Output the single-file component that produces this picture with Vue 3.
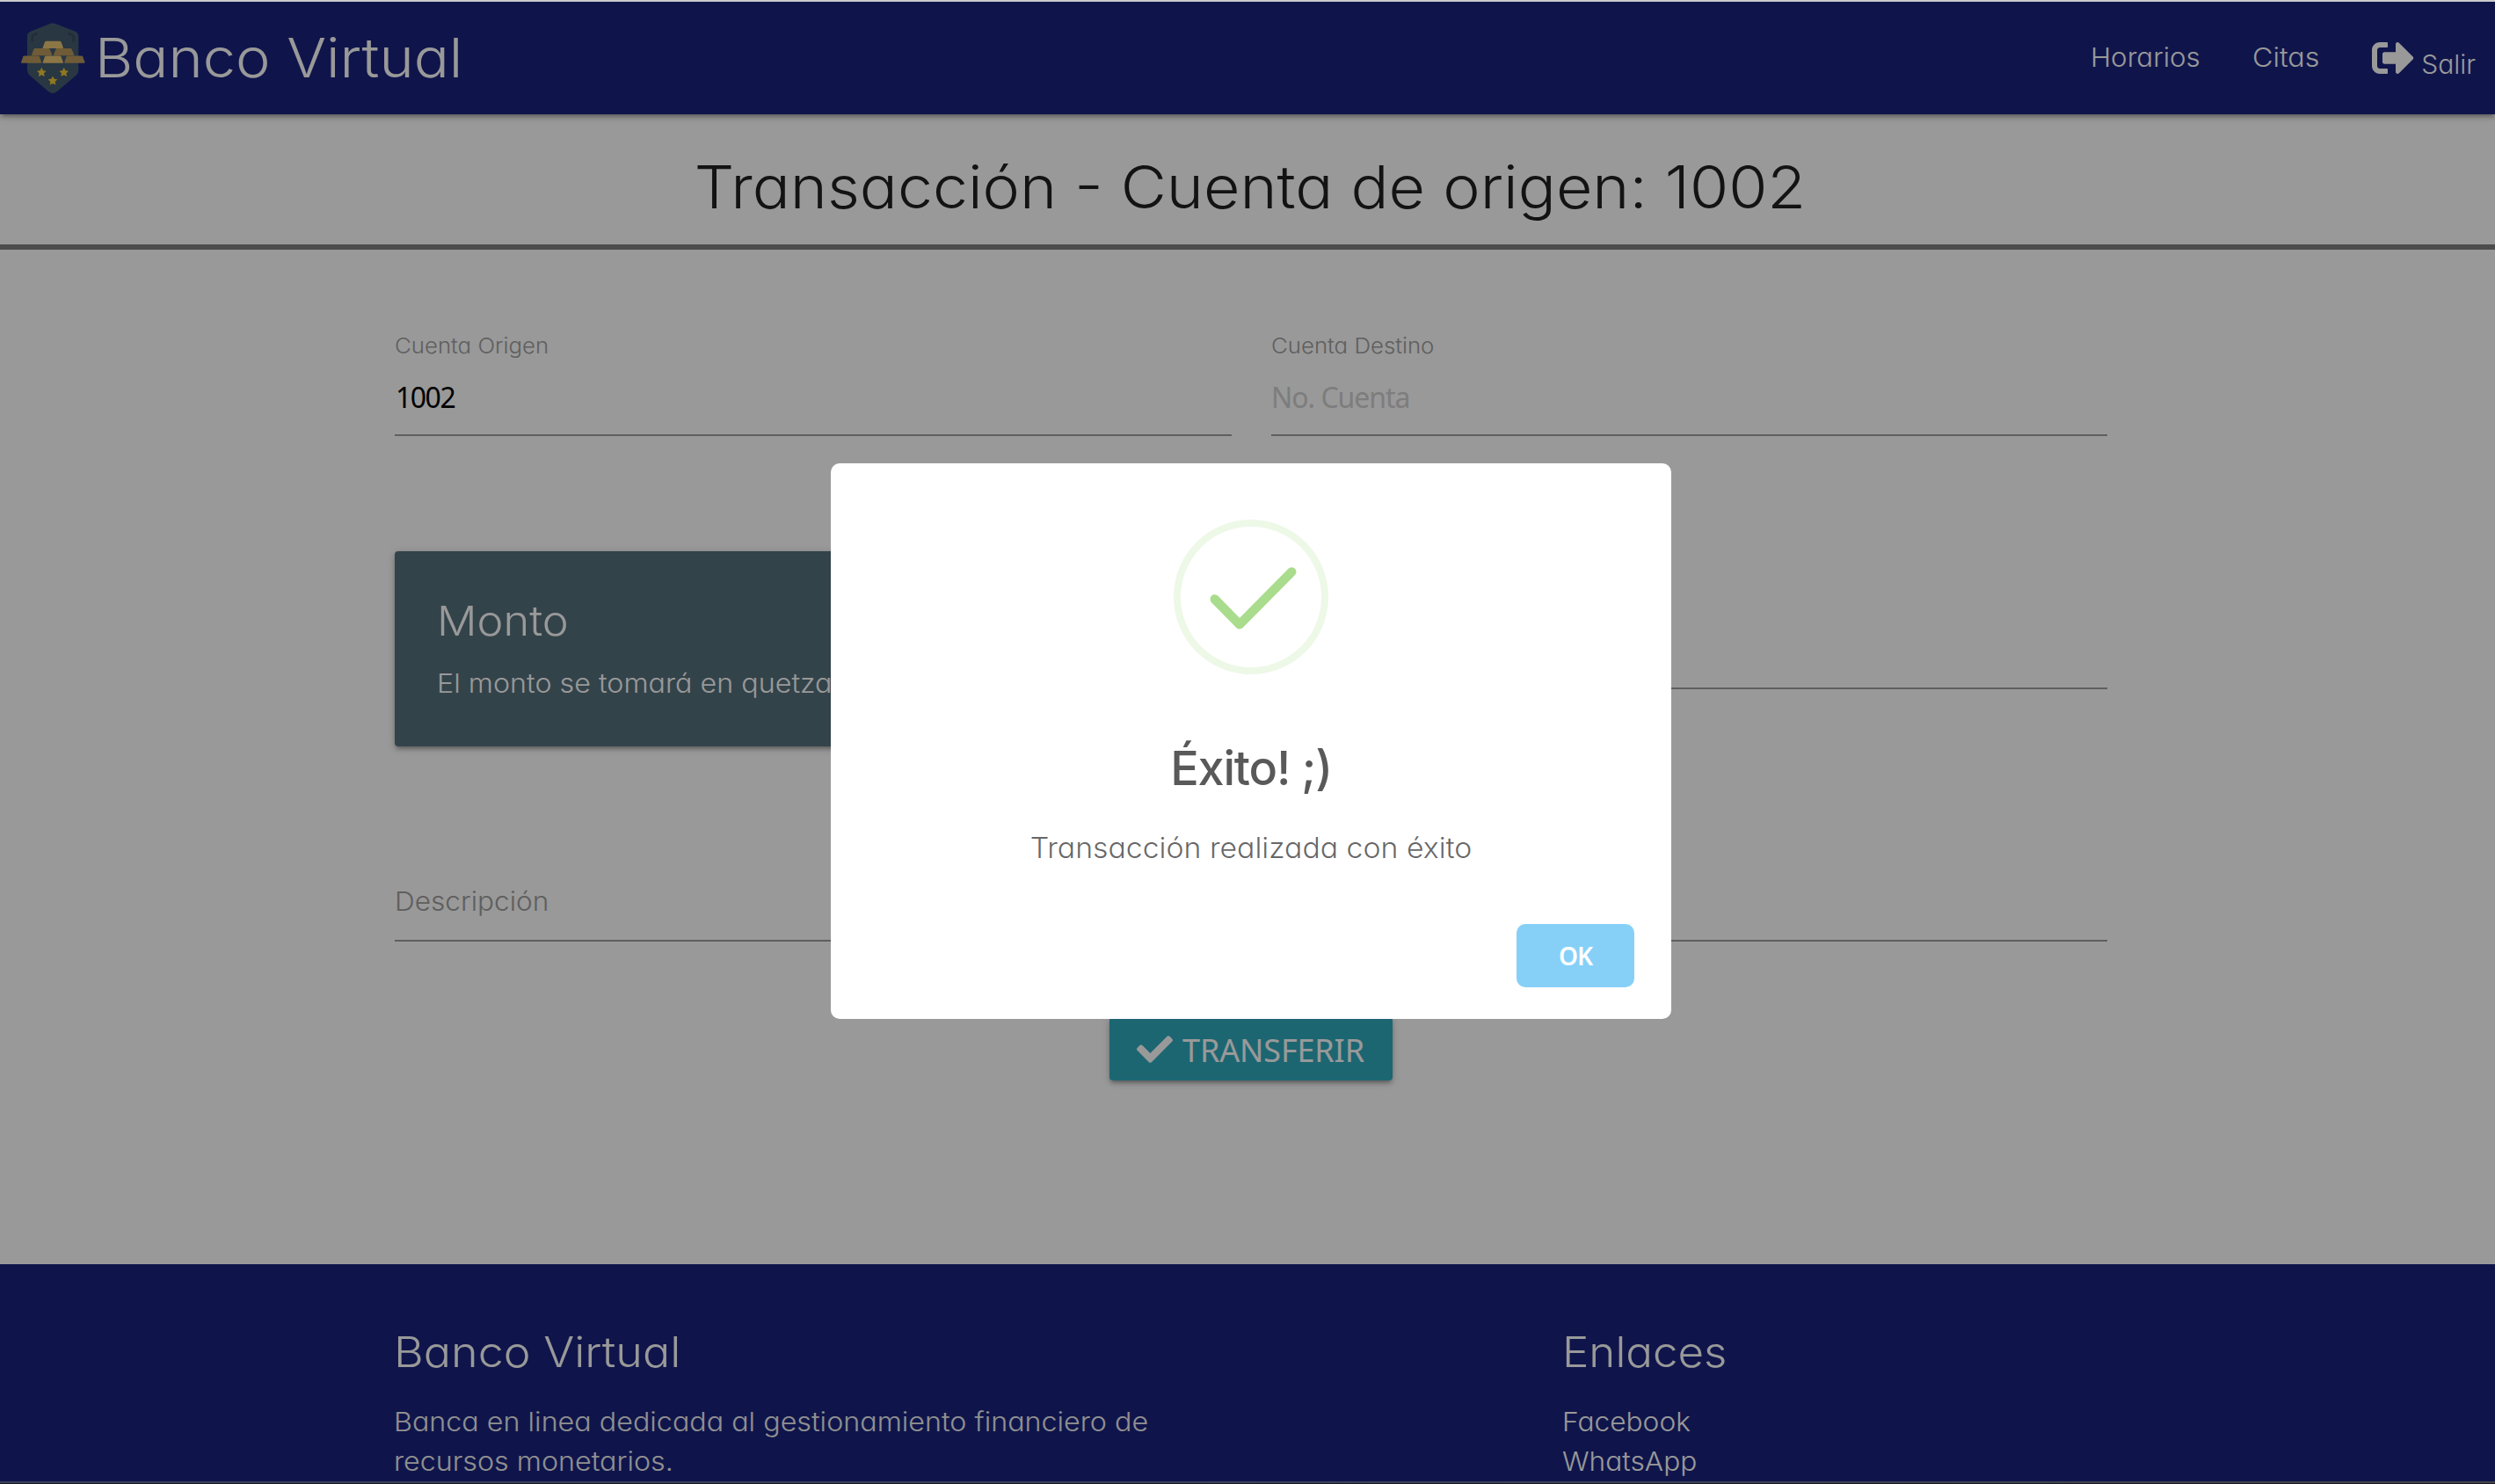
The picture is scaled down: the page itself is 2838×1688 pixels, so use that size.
<script setup>
import { ref } from 'vue'

const cuentaOrigen = ref('1002')
const enlaces = ['Facebook', 'WhatsApp']
const barras = [
  { x: 28.7, y: 20.7, fill: '#ebc576' },
  { x: 16, y: 29, fill: '#b9985d' },
  { x: 41, y: 29, fill: '#b9985d' },
  { x: 4, y: 37.4, fill: '#b9985d' },
  { x: 28.7, y: 37.4, fill: '#ebc576' },
  { x: 53.3, y: 37.4, fill: '#b9985d' }
]
const estrellas = [[27.3, 56.2], [52.7, 56.2], [40, 65.8]]
</script>

<template>
  <div class="window">
    <div class="edge-top"></div>
    <div class="app">
      <nav class="nav">
        <a class="brand">
          <svg class="shield" viewBox="0 0 80 80">
            <path d="M36.8 1Q40 -.6 43.2 1L65.5 9.8Q69.3 11.5 69.3 15.5V53.5Q69.3 57 66.8 59.4L45 78Q40 81.8 35 78L13.500 59.400Q11 57 11 53.500V15.500Q11 11.500 14.800 9.800Z" fill="#445c6e" />
            <path d="M16.700 21.500V16.200Q16.700 14.500 18.300 13.700L22.500 12M63.600 21.500V16.200Q63.600 14.500 62 13.700L57.800 12" fill="none" stroke="#394b60" stroke-width="2.600" />
            <path v-for="(b, i) in barras" :key="i" :fill="b.fill" :transform="`translate(${b.x} ${b.y})`" d="M3.600 0H19.400Q20.300 0 20.700 .9L23.200 7.300Q23.400 8.300 22.600 8.300H.5Q-.3 8.300 0 7.300L2.400 .9Q2.800 0 3.600 0Z" />
            <path v-for="(e, i) in estrellas" :key="'e' + i" fill="#f0c837" :transform="`translate(${e[0]} ${e[1]})`" d="M0-5.400L1.700-2 5.300-1.500 2.700 1.100 3.300 4.800 0 3.100-3.300 4.800-2.700 1.100-5.300-1.500-1.700-2Z" />
          </svg>
          <span class="brand-name">Banco Virtual</span>
        </a>
        <div class="links">
          <a class="horarios">Horarios</a>
          <a class="citas">Citas</a>
          <a class="salir">
            <svg viewBox="0 0 512 512" width="48" height="48" fill="#fff"><path d="M497 273L329 441c-15 15-41 4.500-41-17v-96H152c-13.300 0-24-10.700-24-24v-96c0-13.300 10.700-24 24-24h136V88c0-21.400 25.900-32 41-17l168 168c9.300 9.400 9.300 24.600 0 34zM192 436v-40c0-6.600-5.400-12-12-12H96c-17.700 0-32-14.300-32-32V160c0-17.700 14.300-32 32-32h84c6.600 0 12-5.400 12-12V76c0-6.600-5.400-12-12-12H96c-53 0-96 43-96 96v192c0 53 43 96 96 96h84c6.600 0 12-5.400 12-12z" /></svg>
            <span>Salir</span>
          </a>
        </div>
      </nav>

      <h1 class="title"><span>Transacción - Cuenta de origen: {{ cuentaOrigen }}</span></h1>

      <main class="form">
        <div class="row">
          <div class="field">
            <label class="label">Cuenta Origen</label>
            <div class="value numero">{{ cuentaOrigen }}</div>
          </div>
          <div class="field">
            <label class="label">Cuenta Destino</label>
            <div class="value placeholder">No. Cuenta</div>
          </div>
        </div>
        <div class="row second">
          <div class="card">
            <h2>Monto</h2>
            <p>El monto se tomará en quetzales.</p>
          </div>
          <div class="field amount"></div>
        </div>
        <div class="field description"><label>Descripción</label></div>
        <button class="send">
          <svg viewBox="0 0 512 512" width="41" height="41" fill="#fff"><path d="M173.900 439.400l-166.400-166.400c-10-10-10-26.200 0-36.200l36.200-36.200c10-10 26.200-10 36.200 0L192 312.700 432.100 72.600c10-10 26.200-10 36.200 0l36.200 36.200c10 10 10 26.200 0 36.200l-294.400 294.400c-10 10-26.200 10-36.200 0z" /></svg>
          <span>TRANSFERIR</span>
        </button>
      </main>

      <footer class="footer">
        <section>
          <h3>Banco Virtual</h3>
          <p>Banca en linea dedicada al gestionamiento financiero de recursos monetarios.</p>
        </section>
        <section>
          <h3 class="enlaces">Enlaces</h3>
          <ul>
            <li v-for="e in enlaces" :key="e">{{ e }}</li>
          </ul>
        </section>
      </footer>

      <div class="overlay">
        <div class="modal">
          <svg class="success" viewBox="0 0 176 176" fill="none">
            <circle cx="88" cy="88" r="84" stroke="#edf8e7" stroke-width="8" />
            <path d="M46.700 90.500L75 119.300L134.300 59.400" stroke="#a9dc8c" stroke-width="10.400" stroke-linecap="round" stroke-linejoin="round" />
          </svg>
          <div class="modal-title">Éxito! ;)</div>
          <div class="modal-text">Transacción realizada con éxito</div>
          <button class="ok">OK</button>
        </div>
      </div>
    </div>
    <div class="edge-bottom"></div>
  </div>
</template>

<style>
body {
  margin: 0;
  overflow: hidden;
}
</style>

<style scoped>
.window {
  width: 2838px;
  height: 1688px;
  overflow: hidden;
  font-family: Inter, "Noto Sans", sans-serif;
  font-weight: 300;
  font-size: 30px;
  font-feature-settings: "cv11";
  color: rgba(0, 0, 0, 0.87);
}
h1, h2, h3, p, ul {
  margin: 0;
  padding: 0;
  font-weight: 300;
  list-style: none;
}
button {
  border: 0;
  padding: 0;
}
.edge-top {
  height: 2px;
  background: #cacacc;
}
.edge-bottom {
  height: 2px;
  background: linear-gradient(90deg, #3a4058, #3b405c 50%, #444448);
  border-bottom: 1px solid #161922;
}
.app {
  position: relative;
  height: 1683px;
  overflow: hidden;
  background: #fff;
}
.nav {
  display: flex;
  align-items: center;
  justify-content: space-between;
  height: 128px;
  box-sizing: border-box;
  padding: 0 22px 0 20px;
  background: #1a237e;
  color: #fff;
  box-shadow: 0 4px 4px rgba(0, 0, 0, 0.14), 0 6px 2px -4px rgba(0, 0, 0, 0.12), 0 2px 10px rgba(0, 0, 0, 0.2);
}
.brand, .links, .salir {
  display: flex;
  align-items: center;
}
.brand {
  gap: 8px;
}
.shield {
  width: 80px;
  height: 80px;
}
/* Widened light letterforms, stretched from their left edge */
.brand-name, .horarios, .citas, .label, .description label,
.card h2, .card p, .footer h3, .footer p, .footer ul {
  transform: scaleX(1.075);
  transform-origin: left center;
}
.brand-name {
  font-size: 62px;
  line-height: 80px;
  margin-top: -1px;
}
.links {
  gap: 64.3px;
  line-height: 44px;
}
.horarios {
  transform: scaleX(1.041);
  margin-top: -2px;
}
.citas {
  margin-top: -2px;
}
.salir {
  gap: 8.5px;
}
.salir span {
  padding-top: 14px;
}
.title {
  width: 2845px;
  box-sizing: border-box;
  height: 154px;
  padding-top: 43px;
  border-bottom: 6px solid #808080;
  text-align: center;
  font-size: 67px;
  line-height: 80px;
}
.title span {
  display: inline-block;
  transform: scaleX(1.068);
}
.form {
  display: flex;
  flex-direction: column;
  width: 1948px;
  margin-left: 449px;
  padding-top: 94px;
}
.row {
  display: grid;
  grid-template-columns: 952px 951px;
  gap: 45px;
  align-items: start;
}
.field {
  border-bottom: 2px solid #9e9e9e;
  color: #9e9e9e;
}
.label {
  display: block;
  height: 30px;
  font-size: 24px;
  line-height: 32px;
}
.value {
  height: 86px;
  line-height: 87px;
  font-family: "Noto Sans", sans-serif;
  font-weight: 400;
  font-size: 32px;
}
.numero {
  color: #000;
  letter-spacing: -1.5px;
  padding-left: 1px;
}
.placeholder {
  color: #d1d1d1;
  letter-spacing: -1.05px;
}
.second {
  margin-top: 131px;
}
.card {
  height: 222px;
  box-sizing: border-box;
  padding: 48px;
  border-radius: 4px;
  background: #56707c;
  color: #fff;
  box-shadow: 0 4px 4px rgba(0, 0, 0, 0.14), 0 6px 2px -4px rgba(0, 0, 0, 0.12), 0 2px 10px rgba(0, 0, 0, 0.2);
}
.card h2 {
  font-size: 47px;
  line-height: 62px;
}
.card p {
  margin-top: 18px;
  line-height: 45px;
}
.amount {
  height: 155px;
}
.description {
  margin-top: 151px;
  padding-bottom: 19px;
  line-height: 50px;
}
.description label {
  display: block;
  transform: scaleX(1.053);
}
.send {
  display: flex;
  align-items: center;
  gap: 11px;
  align-self: center;
  width: 322px;
  height: 72px;
  box-sizing: border-box;
  margin-top: 86px;
  padding-left: 31px;
  border-radius: 4px;
  background: #30aabe;
  color: #fff;
  font-family: "Noto Sans", sans-serif;
  font-weight: 400;
  font-size: 36px;
  letter-spacing: -0.13px;
  box-shadow: 0 4px 4px rgba(0, 0, 0, 0.14), 0 6px 2px -4px rgba(0, 0, 0, 0.12), 0 2px 10px rgba(0, 0, 0, 0.2);
}
.send span {
  padding-top: 2px;
}
.footer {
  display: grid;
  grid-template-columns: 1329px 600px;
  height: 260px;
  box-sizing: border-box;
  margin-top: 209px;
  padding: 70px 0 0 448px;
  background: #1a237e;
  color: #fff;
  line-height: 45px;
}
.footer h3 {
  font-size: 48px;
  line-height: 60px;
  margin-bottom: 27px;
  transform: scaleX(1.083);
}
.footer .enlaces {
  transform: scaleX(1.063);
}
.footer p {
  width: 840px;
  color: #f0f0f0;
}
.footer ul {
  transform: scaleX(1.056);
}
.overlay {
  position: absolute;
  top: 0;
  left: 0;
  width: 2846px;
  height: 1683px;
  background: rgba(0, 0, 0, 0.4);
  display: flex;
  align-items: flex-start;
  justify-content: center;
}
.modal {
  display: flex;
  flex-direction: column;
  align-items: center;
  width: 956px;
  height: 632px;
  box-sizing: border-box;
  margin-top: 525px;
  padding: 64px 42px 0;
  border-radius: 10px;
  background: #fff;
}
.success {
  width: 176px;
  height: 176px;
}
.modal-title {
  margin-top: 67px;
  font-size: 54px;
  font-weight: 500;
  line-height: 80px;
  letter-spacing: -1.2px;
  color: rgba(0, 0, 0, 0.65);
}
.modal-text {
  margin-top: 31px;
  font-size: 32px;
  line-height: 40px;
  transform: scaleX(1.056);
  color: rgba(0, 0, 0, 0.6);
}
.ok {
  align-self: flex-end;
  width: 134px;
  height: 72px;
  margin-top: 66px;
  border-radius: 10px;
  background: #86d0f8;
  color: #fff;
  font-family: "Noto Sans", sans-serif;
  font-weight: 600;
  font-size: 28px;
  letter-spacing: -1px;
}
</style>
